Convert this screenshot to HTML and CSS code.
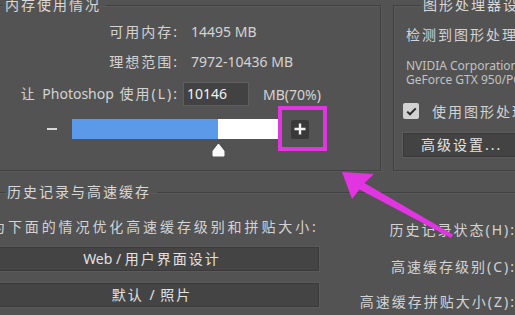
FILE: index.html
```html
<!DOCTYPE html>
<html>
<head>
<meta charset="utf-8">
<meta name="viewport" content="width=device-width, initial-scale=1">
<link rel="stylesheet" href="styles.css">
</head>
<body>
  <div class="page">
    <div class="top-row">
      <fieldset class="group mem">
        <legend>内存使用情况</legend>
        <div class="mem-grid">
          <span class="label">可用内存:</span>
          <span class="val lat">14495 MB</span>
          <span class="label">理想范围:</span>
          <span class="val lat">7972-10436 MB</span>
          <span class="label">让 <span class="lat">Photoshop</span> 使用(L):</span>
          <span class="use-row"><span class="field lat">10146</span><span class="lat">MB(70%)</span></span>
        </div>
        <div class="slider-row">
          <span class="minus"></span>
          <div class="track"></div>
          <span class="plus-btn">
            <svg width="12" height="12" viewBox="0 0 12 12"><path d="M6 0.5v11M0.5 6h11" stroke="#f2f2f2" stroke-width="2.4"/></svg>
          </span>
        </div>
        <div class="thumb-row">
          <svg width="13" height="14" viewBox="0 0 13 14"><path d="M6.5 1 L12 8 V13 H1 V8 Z" fill="#fafafa" stroke="#fafafa" stroke-linejoin="round"/></svg>
        </div>
      </fieldset>

      <fieldset class="group gpu">
        <legend>图形处理器设置</legend>
        <div class="gpu-detect">检测到图形处理器:</div>
        <div class="gpu-name">NVIDIA Corporation<br>GeForce GTX 950/PCIe/SSE2</div>
        <div class="check-row">
          <span class="checkbox">
            <svg width="11" height="9" viewBox="0 0 11 9"><path d="M1.2 4.6 L4 7.3 L9.8 1.4" fill="none" stroke="#2c2c2c" stroke-width="2"/></svg>
          </span>
          <span>使用图形处理器</span>
        </div>
        <div class="adv-btn">高级设置...</div>
      </fieldset>
    </div>

    <fieldset class="group hist">
      <legend>历史记录与高速缓存</legend>
      <div class="hist-body">
        <div class="hist-left">
          <div class="hist-hint">为下面的情况优化高速缓存级别和拼贴大小:</div>
          <div class="preset-btn first"><span class="lat">Web / </span>用户界面设计</div>
          <div class="preset-btn">默认 <span class="lat">/</span> 照片</div>
        </div>
        <div class="hist-right">
          <div class="hist-label l1">历史记录状态(H):</div>
          <div class="hist-label l2">高速缓存级别(C):</div>
          <div class="hist-label l3">高速缓存拼贴大小(Z):</div>
        </div>
      </div>
    </fieldset>
  </div>

  <div class="mark-box"></div>
  <svg class="arrow" width="515" height="315" viewBox="0 0 515 315">
    <polygon points="342,172 374,174 364.5,183 453,234.5 451,238 359.5,189.5 352,199" fill="#e035e0"/>
  </svg>
</body>
</html>
```

FILE: styles.css
```css
* {
  box-sizing: border-box;
}

body {
  margin: 0;
  width: 515px;
  height: 315px;
  overflow: hidden;
  position: relative;
  background: #535353;
  color: #d3d3d3;
  font-family: "Noto Sans", "Noto Sans CJK SC", sans-serif;
  font-size: 14px;
  letter-spacing: 2px;
}

.lat {
  letter-spacing: 0;
}

.page {
  margin-left: -20px;
  width: 640px;
}

.top-row {
  display: flex;
  gap: 12px;
  margin-top: -3px;
}

.group {
  margin: 0;
  padding: 0;
  min-width: 0;
  border: 1px solid #414141;
  box-shadow: inset 1px 1px 0 #5a5a5a, 1px 1px 0 #5a5a5a;
}

legend {
  padding: 0 5px 0 2px;
  line-height: 16px;
  color: #d8d8d8;
}

/* memory box */
.mem {
  width: 401px;
  height: 174px;
}

.mem legend {
  margin-left: 22px;
}

.mem-grid {
  display: grid;
  grid-template-columns: 198px auto;
  column-gap: 4px;
  row-gap: 10px;
  align-items: center;
  padding-top: 9px;
}

.label {
  text-align: right;
  line-height: 20px;
  white-space: nowrap;
}

.val {
  padding-left: 8px;
  line-height: 20px;
}

.use-row {
  display: flex;
  align-items: center;
}

.field {
  width: 66px;
  height: 24px;
  padding-left: 3px;
  margin-right: 14px;
  line-height: 22px;
  background: #424242;
  border: 1px solid #5e5e5e;
  color: #f2f2f2;
}

.slider-row {
  display: flex;
  align-items: center;
  height: 20px;
  margin-top: 13px;
  padding-left: 66px;
}

.minus {
  width: 10px;
  height: 2px;
  margin-right: 15px;
  background: #d8d8d8;
}

.track {
  width: 207px;
  height: 20px;
  background: linear-gradient(to right, #5a9ae8 146px, #ffffff 146px);
}

.plus-btn {
  display: flex;
  align-items: center;
  justify-content: center;
  width: 18px;
  height: 19px;
  margin-left: 12px;
  background: #393939;
  border-radius: 2px;
}

.thumb-row {
  margin-top: 4px;
  padding-left: 231px;
  height: 14px;
}

.thumb-row svg {
  display: block;
}

/* gpu box */
.gpu {
  width: 200px;
  height: 174px;
  padding-left: 12px;
  white-space: nowrap;
}

.gpu legend {
  margin-left: 15px;
}

.gpu-detect {
  padding-top: 12px;
  line-height: 20px;
}

.gpu-name {
  margin-top: 14px;
  font-size: 12px;
  line-height: 14px;
  letter-spacing: 0;
  color: #c2c2c2;
}

.check-row {
  display: flex;
  align-items: center;
  height: 20px;
  margin-top: 14px;
}

.checkbox {
  display: flex;
  align-items: center;
  justify-content: center;
  width: 16px;
  height: 16px;
  margin-left: -3px;
  margin-right: 13px;
  background: #d2d2d2;
  border-radius: 2px;
}

.adv-btn {
  width: 130px;
  height: 24px;
  margin-top: 12px;
  margin-left: -3px;
  padding-left: 17px;
  line-height: 22px;
  background: #434343;
  border: 1px solid #393939;
  box-shadow: 0 0 0 1px #5c5c5c;
  color: #e4e4e4;
}

/* history box */
.hist {
  width: 600px;
  height: 200px;
  margin-top: 13px;
}

.hist legend {
  margin-left: 24px;
  padding: 0 6px 0 2px;
}

.hist-body {
  display: flex;
}

.hist-left {
  width: 334px;
  margin-left: 4px;
  padding-top: 17px;
}

.hist-hint {
  padding-left: 6px;
  line-height: 20px;
  letter-spacing: 2.9px;
  white-space: nowrap;
}

.preset-btn {
  height: 24px;
  margin-top: 12px;
  line-height: 22px;
  text-align: center;
  background: #444444;
  border: 1px solid #3a3a3a;
  box-shadow: 0 0 0 1px #5a5a5a;
  color: #e2e2e2;
}

.preset-btn.first {
  margin-top: 10px;
}

.hist-right {
  width: 197px;
  text-align: right;
  white-space: nowrap;
}

.hist-label {
  line-height: 20px;
}

.l1 { margin-top: 20px; }
.l2 { margin-top: 17px; }
.l3 { margin-top: 15px; }

/* annotations */
.mark-box {
  position: absolute;
  left: 278px;
  top: 106px;
  width: 49px;
  height: 45px;
  border: 4px solid #e035e0;
}

.arrow {
  position: absolute;
  left: 0;
  top: 0;
  pointer-events: none;
}
```
